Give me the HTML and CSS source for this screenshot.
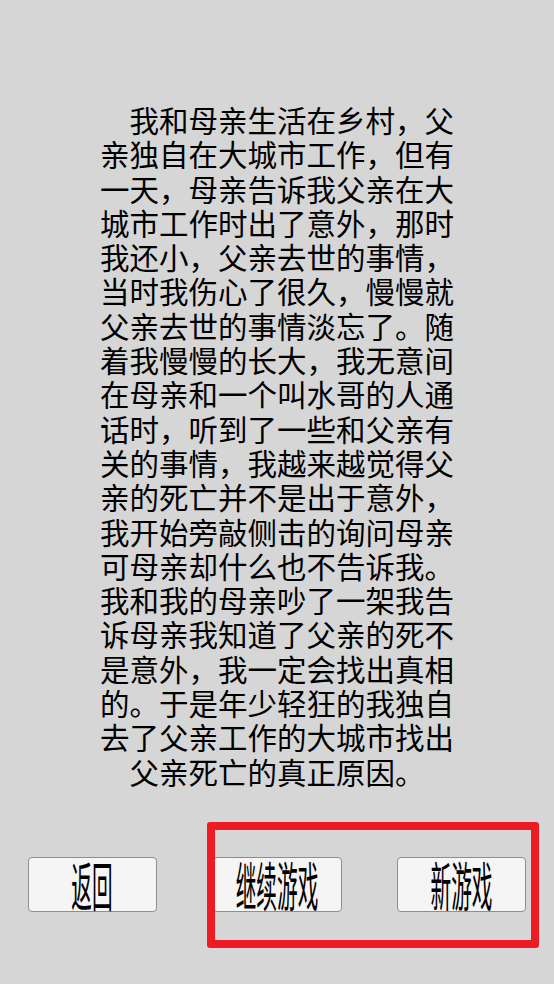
FILE: index.html
```html
<!DOCTYPE html>
<html lang="zh-CN">
<head>
<meta charset="utf-8">
<title>剧情</title>
<link rel="stylesheet" href="styles.css">
</head>
<body>
<div class="screen">
  <div class="story">
    <p class="story-text">　我和母亲生活在乡村，父亲独自在大城市工作，但有一天，母亲告诉我父亲在大城市工作时出了意外，那时我还小，父亲去世的事情，当时我伤心了很久，慢慢就父亲去世的事情淡忘了。随着我慢慢的长大，我无意间在母亲和一个叫水哥的人通话时，听到了一些和父亲有关的事情，我越来越觉得父亲的死亡并不是出于意外，我开始旁敲侧击的询问母亲可母亲却什么也不告诉我。我和我的母亲吵了一架我告诉母亲我知道了父亲的死不是意外，我一定会找出真相的。于是年少轻狂的我独自去了父亲工作的大城市找出父亲死亡的真正原因。</p>
  </div>
  <div class="actions">
    <div class="cell"><button class="btn"><span class="btn-label">返回</span></button></div>
    <div class="cell"><button class="btn"><span class="btn-label">继续游戏</span></button></div>
    <div class="cell"><button class="btn"><span class="btn-label">新游戏</span></button></div>
  </div>
  <div class="highlight"></div>
</div>
</body>
</html>
```
FILE: styles.css
```css
html, body {
  margin: 0;
  padding: 0;
  background: #d6d6d6;
}

.screen {
  position: relative;
  width: 554px;
  height: 984px;
  overflow: hidden;
  background: #d6d6d6;
  font-family: "Noto Sans CJK SC", "Noto Sans", sans-serif;
  color: #000;
}

.story {
  padding-top: 102px;
  display: flex;
  justify-content: center;
}

.story-text {
  margin: 0;
  width: 12em;
  font-size: 29.5px;
  line-height: 34.3px;
  text-align: center;
  text-spacing-trim: space-all;
  line-break: strict;
}

.actions {
  margin-top: 69px;
  display: flex;
}

.cell {
  flex: 1 1 0;
  display: flex;
  justify-content: center;
}

.btn {
  width: 129px;
  height: 55px;
  padding: 0;
  margin: 0;
  box-sizing: border-box;
  border: 1px solid #8e8e8e;
  border-radius: 4px;
  background: #f5f5f5;
  display: flex;
  align-items: center;
  justify-content: center;
  overflow: visible;
  font-family: "Noto Sans CJK SC", sans-serif;
  color: #000;
}

.btn-label {
  display: inline-block;
  font-size: 53px;
  line-height: 1;
  white-space: nowrap;
  transform: scaleX(0.39);
  transform-origin: center;
}

.highlight {
  position: absolute;
  left: 207px;
  top: 822px;
  width: 332px;
  height: 126px;
  box-sizing: border-box;
  border: 8px solid #ed1c24;
  border-radius: 3px;
  pointer-events: none;
}
```
